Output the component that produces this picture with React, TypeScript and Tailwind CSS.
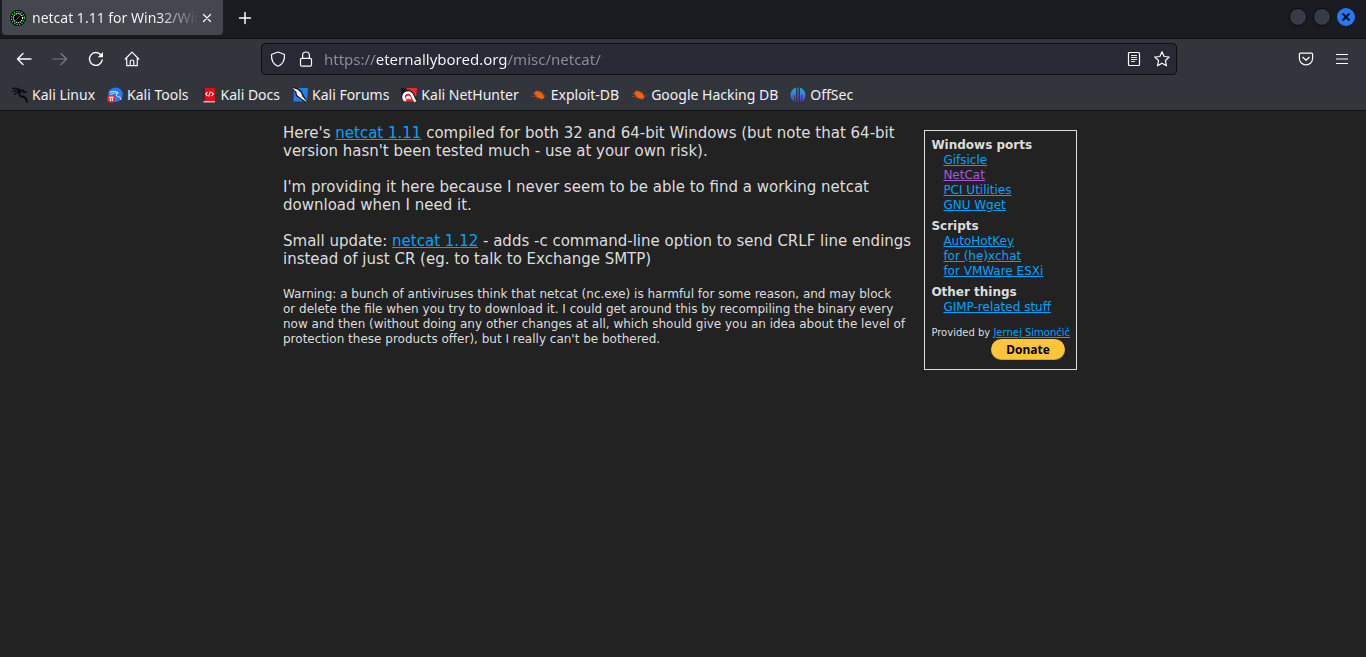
import React, { ReactNode } from "react";

const line = {
  fill: "none",
  stroke: "currentColor",
  strokeWidth: 1.2,
  strokeLinecap: "round" as const,
  strokeLinejoin: "round" as const,
};

function Icon({ children, className = "" }: { children: ReactNode; className?: string }) {
  return (
    <svg viewBox="0 0 16 16" className={`size-4 shrink-0 ${className}`} aria-hidden="true">
      {children}
    </svg>
  );
}

function ToolButton({ label, children, disabled = false, className = "" }: { label: string; children: ReactNode; disabled?: boolean; className?: string }) {
  return (
    <button type="button" aria-label={label} disabled={disabled} className={`grid size-8 shrink-0 place-items-center rounded text-[#fbfbfe] disabled:text-[#7b7c82] ${className}`}>
      {children}
    </button>
  );
}

const Bug = () => (
  <Icon>
    <path d="M3 6 5 4 9 4.500 12 7 13.500 10 12 12 8 11.500 5 9.500Z" fill="#f1620d" />
    <path d="M1.500 6.500 5 7M1 9.500 6 9M7 5 6 3M11 6 12.500 4.500M12 8.500 15.500 9M6 11 4.500 12.500M10 12 10.500 13.500" stroke="#a04c22" strokeWidth="0.800" fill="none" />
  </Icon>
);

const bookmarks: { label: string; icon: ReactNode }[] = [
  {
    label: "Kali Linux",
    icon: (
      <Icon>
        <path d="M0.300 1.500C3 .8 6 1.300 8.500 3.200M.5 4.500C3 3.300 6 3.200 8.500 4M2.500 7.500C4 5.500 6.500 4.800 9 5M8.200 3 11 3.300 13.500 5.300 11.500 5.200 9.500 4.800" fill="none" stroke="#08090b" strokeWidth="1.300" />
        <path d="M8.500 4.500C6 6 7 9.300 10.200 9.500 13.500 9.700 14.500 11.500 15.200 15.500" fill="none" stroke="#08090b" strokeWidth="1.800" />
      </Icon>
    ),
  },
  {
    label: "Kali Tools",
    icon: (
      <Icon>
        <circle cx="8.500" cy="7.700" r="7.300" fill="#2777ff" />
        <path d="M2.500 5.500C6 3.500 9 4 11.500 5.700M3 8C6 5.500 9 5.500 10.500 6.200 8 8 10 9.500 12 9.800 13.500 10.200 13.800 12 14 13" fill="none" stroke="#b7e2ff" strokeWidth="1.100" />
        <circle cx="4.200" cy="11.800" r="4" fill="#e52b31" />
        <path d="M2 10.200H6.600M3.300 10.200V14M5.300 10.200V14" stroke="#fff" strokeWidth="1" fill="none" />
      </Icon>
    ),
  },
  {
    label: "Kali Docs",
    icon: (
      <Icon>
        <path d="M2 1H14V14H2Z" fill="#dc1014" />
        <path d="M2 .5H3.600V14H2Z" fill="#2b2056" />
        <path d="M2.500 14H14V15.500H2.500Z" fill="#c5c0c3" />
        <path d="M6.500 5 4.800 7 6.500 9M10.500 5 12.300 7 10.500 9M9.300 4.500 7.800 9.500" stroke="#fff" strokeWidth="1.100" fill="none" />
      </Icon>
    ),
  },
  {
    label: "Kali Forums",
    icon: (
      <Icon>
        <path d="M2 1H16L15 14.500H1.500Z" fill="#237cf4" />
        <path d="M0 0 6 1 9.500 4 11.500 8 16 15.500 13 15.500 7.500 11.500 4 9 3 5Z" fill="#16171d" />
        <path d="M.5 1 5.500 2.500 8.800 5.500 10.500 9.500 15.300 15.500 8.500 11 5 8 4.500 5Z" fill="#f4f6fa" />
      </Icon>
    ),
  },
  {
    label: "Kali NetHunter",
    icon: (
      <Icon>
        <path d="M3 1H16L14.500 14.500H2Z" fill="#ed2637" />
        <path d="M0 1 6 1.500 4.500 5 1 8Z" fill="#15161b" />
        <path d="M2 11.500C1.500 6 7 3 10.500 6.500L14.500 14" fill="none" stroke="#16171b" strokeWidth="4" />
        <path d="M5 13.500C.5 11 2.500 5.500 7.500 5.500 12 5.500 10.500 10.500 14.500 14.500M5.500 11.500C6.500 9.500 8.500 9.500 9 12" fill="none" stroke="#fff" strokeWidth="2.500" />
      </Icon>
    ),
  },
  { label: "Exploit-DB", icon: <Bug /> },
  { label: "Google Hacking DB", icon: <Bug /> },
  {
    label: "OffSec",
    icon: (
      <Icon>
        <defs>
          <linearGradient id="offsec" x1="0" y1="0" x2="0" y2="1">
            <stop offset="0" stopColor="#12b4c6" />
            <stop offset="0.500" stopColor="#397ade" />
            <stop offset="1" stopColor="#6a2dd5" />
          </linearGradient>
        </defs>
        <path d="M6 .7V15.300C2.500 14.300 .5 11.500 .5 8S2.500 1.700 6 .7ZM7.500 .5H8.500V15.500H7.500ZM10 .7C13.500 1.700 15.500 4.500 15.500 8S13.500 14.300 10 15.300Z" fill="url(#offsec)" />
        <path d="M4 8 5 15M12 8 11 15" stroke="#33353c" strokeWidth="1" />
      </Icon>
    ),
  },
];

const groups: { title: string; links: { label: string; visited?: boolean }[] }[] = [
  { title: "Windows ports", links: [{ label: "Gifsicle" }, { label: "NetCat", visited: true }, { label: "PCI Utilities" }, { label: "GNU Wget" }] },
  { title: "Scripts", links: [{ label: "AutoHotKey" }, { label: "for (he)xchat" }, { label: "for VMWare ESXi" }] },
  { title: "Other things", links: [{ label: "GIMP-related stuff" }] },
];

function TabBar() {
  return (
    <div className="flex h-[39px] items-start border-b border-[#111216] bg-[#1a1b20] pl-0.5">
      <div className="flex h-[35px] w-[221px] items-center rounded-b bg-[#45474e] pr-2 pl-2">
        <svg viewBox="0 0 16 16" className="size-4 shrink-0" aria-hidden="true">
          <circle cx="8" cy="8" r="8" fill="#020302" />
          <circle cx="8" cy="8" r="6.500" fill="none" stroke="#17ee29" strokeWidth="1.300" strokeDasharray="1.300 1.250" />
          <circle cx="8" cy="8" r="4.600" fill="none" stroke="#f2fff2" strokeWidth="1.200" strokeDasharray="1.200 .87" />
          <path d="M5.500 10.500 10.500 5.500" stroke="#167a1f" strokeWidth="1" />
        </svg>
        <span className="ml-1.5 min-w-0 flex-1 overflow-hidden bg-linear-to-r from-[#fbfbfe] from-75% to-transparent bg-clip-text text-[14px] whitespace-nowrap text-transparent">
          netcat 1.11 for Win32/Win64
        </span>
        <button type="button" aria-label="Close tab" className="grid size-4 shrink-0 place-items-center text-[#fbfbfe]">
          <Icon><path {...line} d="M4.500 4.500 11.500 11.500M11.500 4.500 4.500 11.500" /></Icon>
        </button>
      </div>
      <ToolButton label="New tab" className="mt-0.5 ml-1.5">
        <Icon><path {...line} strokeWidth="1.500" d="M8 2.500V13.500M2.500 8H13.500" /></Icon>
      </ToolButton>
      <div className="mt-2 mr-[11px] ml-auto flex gap-1.5">
        <button type="button" aria-label="Minimize" className="size-[18px] rounded-full border border-[#0a0b0e] bg-[#363b48]" />
        <button type="button" aria-label="Maximize" className="size-[18px] rounded-full border border-[#0a0b0e] bg-[#363b48]" />
        <button type="button" aria-label="Close" className="grid size-[18px] place-items-center rounded-full bg-[#2777ff] text-[#0b1222]">
          <Icon><path d="M4.500 4.500 11.500 11.500M11.500 4.500 4.500 11.500" stroke="currentColor" strokeWidth="2.200" /></Icon>
        </button>
      </div>
    </div>
  );
}

function NavBar() {
  return (
    <div className="flex h-10 items-center bg-[#33353c] px-2">
      <div className="flex shrink-0 gap-1">
        <ToolButton label="Back"><Icon><path {...line} strokeWidth="1.400" d="M15 8H1.500M7 2.500 1.500 8 7 13.500" /></Icon></ToolButton>
        <ToolButton label="Forward" disabled><Icon><path {...line} d="M1 8H14.500M9 2.500 14.500 8 9 13.500" /></Icon></ToolButton>
        <ToolButton label="Reload"><Icon><path {...line} strokeWidth="1.400" d="M14.200 9A6.400 6.400 0 1 1 12.800 3.800" /><path d="M15 1V6.300H9.700Z" fill="currentColor" /></Icon></ToolButton>
        <ToolButton label="Home"><Icon><path {...line} d="M1.200 8 8 1.200 14.800 8M2.700 7V14.700H13.300V7M6.200 14.500V10.500Q6.200 9 8 9 9.800 9 9.800 10.500V14.500" /></Icon></ToolButton>
      </div>
      <div className="flex-1" />
      <div className="flex h-8 w-[68%] max-w-[916px] items-center rounded border border-[#0f1014] bg-[#272935] pr-1.5 pl-2 text-[#fbfbfe]">
        <Icon><path {...line} d="M8 1 14.500 3.500C14.800 9 12.500 13.500 8 15.200 3.500 13.500 1.200 9 1.500 3.500Z" /></Icon>
        <Icon className="ml-3"><path {...line} d="M4.600 7.300V4.400A3.400 3.400 0 0 1 11.400 4.400V7.300M3.700 7.300H12.300Q13.500 7.300 13.500 8.500V14Q13.500 15.200 12.300 15.200H3.700Q2.500 15.200 2.500 14V8.500Q2.500 7.300 3.700 7.300Z" /></Icon>
        <input
          type="text"
          aria-label="Address"
          defaultValue="https://eternallybored.org/misc/netcat/"
          className="ml-2.5 min-w-0 flex-1 bg-[linear-gradient(to_right,#8e8f98_51px,#fbfbfe_51px,#fbfbfe_183px,#8e8f98_183px)] bg-clip-text text-transparent caret-white outline-none"
        />
        <button type="button" aria-label="Reader view"><Icon><path {...line} d="M3.500 1.500H12.500Q13.500 1.500 13.500 2.500V13.500Q13.500 14.500 12.500 14.500H3.500Q2.500 14.500 2.500 13.500V2.500Q2.500 1.500 3.500 1.500Z" /><path d="M5 4.500H11M5 6.500H11M5 8.500H11M5 10.500H9" stroke="currentColor" strokeWidth="0.900" /></Icon></button>
        <button type="button" aria-label="Bookmark this page" className="ml-3"><Icon><path {...line} d="M8 .8 10.100 5.500 15.200 6 11.400 9.500 12.500 14.800 8 12.200 3.500 14.800 4.600 9.500 .8 6 5.900 5.500Z" /></Icon></button>
      </div>
      <div className="flex-1" />
      <div className="flex shrink-0 gap-1">
        <ToolButton label="Save to Pocket"><Icon><path {...line} d="M2.400 2.200H13.600Q14.600 2.200 14.600 3.200V7.500A6.600 6.300 0 0 1 1.400 7.500V3.200Q1.400 2.200 2.400 2.200ZM4.800 6.300 8 9.300 11.200 6.300" /></Icon></ToolButton>
        <ToolButton label="Menu"><Icon><path d="M2 3.500H14M2 8H14M2 12.500H14" stroke="currentColor" strokeWidth="1.200" /></Icon></ToolButton>
      </div>
    </div>
  );
}

export default function App() {
  return (
    <div className="min-h-screen bg-[#222222] font-['DejaVu_Sans',sans-serif] text-[#dddddd]">
      <header className="font-['Noto_Sans',sans-serif] text-[15px] leading-5 text-[#f0f0f3]">
        <TabBar />
        <NavBar />
        <nav aria-label="Bookmarks" className="flex h-8 items-center gap-3 border-b border-[#0e0f12] bg-[#33353c] px-3 text-[14px]">
          {bookmarks.map((b) => (
            <a key={b.label} href="#" className="flex items-center gap-1 whitespace-nowrap">
              {b.icon}
              {b.label}
            </a>
          ))}
        </nav>
      </header>
      <div className="mx-auto flex max-w-[800px] items-start pt-[13px]">
        <main className="min-w-0 flex-1 text-[15px] leading-[18px]">
          <p>
            Here's <a href="#" className="text-[#00a2ff] underline">netcat 1.11</a> compiled for both 32 and 64-bit Windows (but note that 64-bit version hasn't been tested much - use at your own risk).
          </p>
          <p className="mt-[18px]">I'm providing it here because I never seem to be able to find a working netcat download when I need it.</p>
          <p className="mt-[18px]">
            Small update: <a href="#" className="text-[#00a2ff] underline">netcat 1.12</a> - adds -c command-line option to send CRLF line endings instead of just CR (eg. to talk to Exchange SMTP)
          </p>
          <p className="mt-[19px] text-[12px] leading-[15px]">
            Warning: a bunch of antiviruses think that netcat (nc.exe) is harmful for some reason, and may block
            <br />
            or delete the file when you try to download it. I could get around this by recompiling the binary every
            <br />
            now and then (without doing any other changes at all, which should give you an idea about the level of
            <br />
            protection these products offer), but I really can't be bothered.
          </p>
        </main>
        <aside className="mt-1.5 mr-1.5 ml-1.5 shrink-0 border border-[#dddddd] px-1.5 pt-[7px] pb-[9px] text-[12px] leading-[15px]">
          {groups.map((g) => (
            <section key={g.title} className="mb-1.5">
              <h2 className="font-bold">{g.title}</h2>
              <ul className="pl-3">
                {g.links.map((l) => (
                  <li key={l.label}>
                    <a href="#" className={l.visited ? "text-[#a45bd6] underline" : "text-[#00a2ff] underline"}>{l.label}</a>
                  </li>
                ))}
              </ul>
            </section>
          ))}
          <p className="mt-3 text-[10px] leading-3">
            Provided by <a href="#" className="text-[#00a2ff] underline">Jernej Simončič</a>
          </p>
          <div className="flex justify-end pr-[5px]">
            <button type="button" className="h-[21px] w-[74px] rounded-full border-b border-[#e0a020] bg-[#ffc439] font-['Noto_Sans',sans-serif] text-[12px] font-bold text-black">Donate</button>
          </div>
        </aside>
      </div>
    </div>
  );
}
